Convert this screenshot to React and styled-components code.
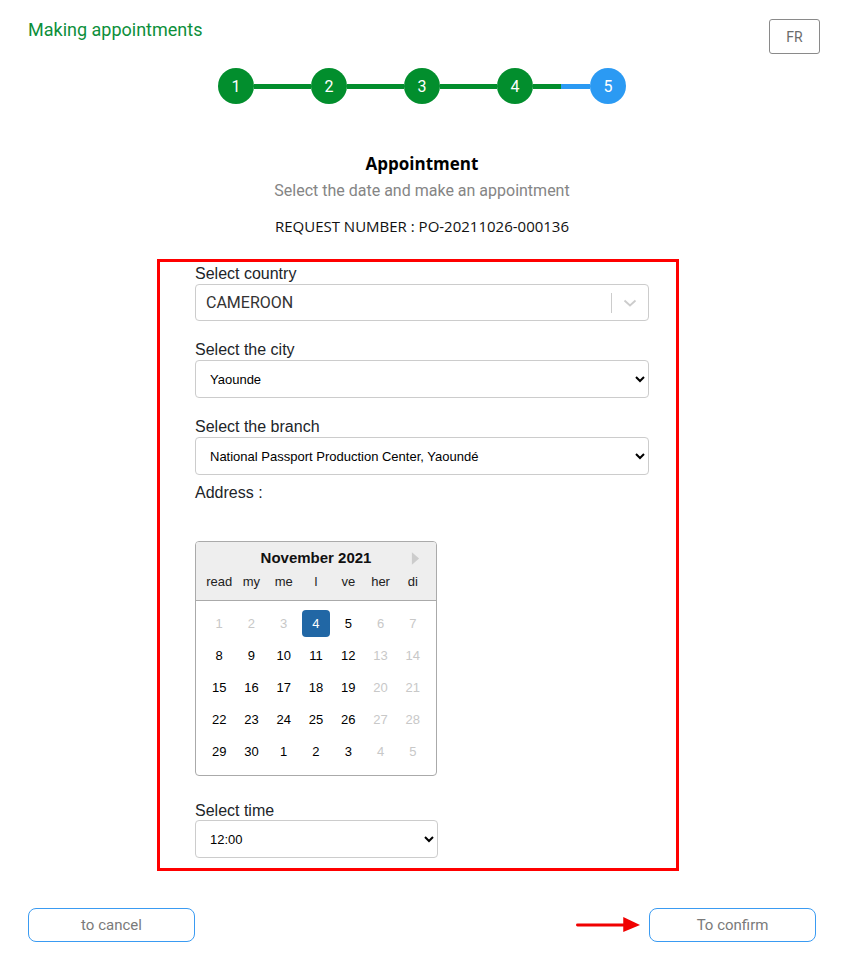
import React from "react";
import styled, { createGlobalStyle } from "styled-components";

const GlobalStyle = createGlobalStyle`
  body {
    margin: 0;
    background: #ffffff;
    font-family: Roboto, "Liberation Sans", Arial, sans-serif;
  }
`;

const steps = [1, 2, 3, 4, 5];
const weekDays = ["read", "my", "me", "l", "ve", "her", "di"];
const days = [
  [1, true], [2, true], [3, true], [4, false, true], [5], [6, true], [7, true],
  [8], [9], [10], [11], [12], [13, true], [14, true],
  [15], [16], [17], [18], [19], [20, true], [21, true],
  [22], [23], [24], [25], [26], [27, true], [28, true],
  [29], [30], [1], [2], [3], [4, true], [5, true],
];

export default function App() {
  return (
    <Page>
      <GlobalStyle />
      <Header>
        <Title>Making appointments</Title>
        <LangButton>FR</LangButton>
      </Header>

      <Stepper>
        {steps.map((n, i) => (
          <React.Fragment key={n}>
            <StepCircle $current={n === 5}>{n}</StepCircle>
            {i < steps.length - 1 && <Connector $half={n === 4} />}
          </React.Fragment>
        ))}
      </Stepper>

      <Heading>Appointment</Heading>
      <Subtitle>Select the date and make an appointment</Subtitle>
      <RequestNumber>REQUEST NUMBER : PO-20211026-000136</RequestNumber>

      <FormBox>
        <Label>Select country</Label>
        <ComboBox>
          <ComboValue>CAMEROON</ComboValue>
          <ComboSeparator />
          <ComboArrow viewBox="0 0 20 20">
            <path
              d="M4.5 7.5 L10 12.5 L15.5 7.5"
              fill="none"
              stroke="#cccccc"
              strokeWidth="1.8"
            />
          </ComboArrow>
        </ComboBox>

        <FieldGap />
        <Label>Select the city</Label>
        <NativeSelect defaultValue="yaounde">
          <option value="yaounde">Yaounde</option>
        </NativeSelect>

        <FieldGap />
        <Label>Select the branch</Label>
        <NativeSelect defaultValue="npc">
          <option value="npc">National Passport Production Center, Yaoundé</option>
        </NativeSelect>

        <AddressLabel>Address :</AddressLabel>

        <Calendar>
          <CalendarHead>
            <MonthRow>
              <MonthTitle>November 2021</MonthTitle>
              <NextArrow viewBox="0 0 10 16">
                <path d="M1 1 L9 8 L1 15 Z" fill="#cccccc" />
              </NextArrow>
            </MonthRow>
            <WeekRow>
              {weekDays.map((d) => (
                <WeekDay key={d}>{d}</WeekDay>
              ))}
            </WeekRow>
          </CalendarHead>
          <DayGrid>
            {days.map(([n, off, sel], i) => (
              <DayCell key={i}>
                <Day $off={off} $selected={sel}>
                  {n}
                </Day>
              </DayCell>
            ))}
          </DayGrid>
        </Calendar>

        <TimeLabel>Select time</TimeLabel>
        <NativeSelect defaultValue="12" $narrow>
          <option value="12">12:00</option>
        </NativeSelect>
      </FormBox>

      <Footer>
        <ActionButton>to cancel</ActionButton>
        <ConfirmGroup>
          <PointerArrow viewBox="0 0 66 16">
            <rect x="0" y="6.5" width="50" height="3" rx="1.5" fill="#f00000" />
            <path d="M48 0 L65 8 L48 15 Z" fill="#f00000" />
          </PointerArrow>
          <ActionButton>To confirm</ActionButton>
        </ConfirmGroup>
      </Footer>
    </Page>
  );
}

const Page = styled.div`
  width: 844px;
  min-height: 964px;
  display: flex;
  flex-direction: column;
`;

const Header = styled.div`
  display: flex;
  justify-content: space-between;
  align-items: flex-start;
  padding: 19px 24px 0 28px;
`;

const Title = styled.div`
  font-size: 18px;
  line-height: 22px;
  color: #0d8f3b;
`;

const LangButton = styled.button`
  width: 51px;
  height: 35px;
  box-sizing: border-box;
  border: 1px solid #8a8a8a;
  border-radius: 3px;
  background: #ffffff;
  color: #6b6b6b;
  font-family: Roboto, sans-serif;
  font-size: 14px;
  padding: 0;
`;

const Stepper = styled.div`
  display: flex;
  justify-content: center;
  align-items: center;
  margin-top: 14px;
`;

const StepCircle = styled.div`
  width: 36px;
  height: 36px;
  border-radius: 50%;
  background: ${(p) => (p.$current ? "#2b9af3" : "#028e2d")};
  color: #ffffff;
  font-size: 16px;
  display: flex;
  align-items: center;
  justify-content: center;
`;

const Connector = styled.div`
  width: 57px;
  height: 5px;
  background: ${(p) =>
    p.$half
      ? "linear-gradient(90deg, #028e2d 0 50%, #2b9af3 50% 100%)"
      : "#028e2d"};
`;

const Heading = styled.div`
  margin-top: 49px;
  text-align: center;
  font-family: "Open Sans", Roboto, sans-serif;
  font-size: 17px;
  font-weight: 700;
  line-height: 22px;
  color: #000000;
`;

const Subtitle = styled.div`
  margin-top: 5px;
  text-align: center;
  font-size: 16px;
  line-height: 22px;
  color: #858585;
`;

const RequestNumber = styled.div`
  margin-top: 13px;
  text-align: center;
  font-family: "Open Sans", Roboto, sans-serif;
  font-size: 15px;
  line-height: 22px;
  color: #111111;
`;

const FormBox = styled.div`
  margin: 22px 0 0 157px;
  width: 522px;
  box-sizing: border-box;
  border: 3px solid #ff0000;
  padding: 3px 27px 10px 35px;
  display: flex;
  flex-direction: column;
  align-items: flex-start;
  font-family: "Liberation Sans", Arial, sans-serif;
`;

const Label = styled.div`
  font-size: 16px;
  line-height: 18px;
  color: #212529;
  height: 19px;
`;

const FieldGap = styled.div`
  height: 20px;
`;

const ComboBox = styled.div`
  width: 454px;
  height: 37px;
  box-sizing: border-box;
  border: 1px solid #cccccc;
  border-radius: 4px;
  display: flex;
  align-items: center;
`;

const ComboValue = styled.div`
  flex: 1;
  padding-left: 10px;
  font-family: Roboto, sans-serif;
  font-size: 16px;
  color: #333333;
`;

const ComboSeparator = styled.div`
  width: 1px;
  height: 20px;
  background: #cccccc;
`;

const ComboArrow = styled.svg`
  width: 20px;
  height: 20px;
  margin: 0 8px;
`;

const NativeSelect = styled.select`
  width: ${(p) => (p.$narrow ? "243px" : "454px")};
  height: 38px;
  box-sizing: border-box;
  border: 1px solid #cccccc;
  border-radius: 4px;
  background: #ffffff;
  padding: 0 6px 0 10px;
  font-family: "Liberation Sans", Arial, sans-serif;
  font-size: 13px;
  color: #000000;
`;

const AddressLabel = styled.div`
  margin-top: 9px;
  font-size: 16px;
  line-height: 18px;
  color: #212529;
`;

const Calendar = styled.div`
  margin-top: 39px;
  width: 242px;
  box-sizing: border-box;
  border: 1px solid #aaaaaa;
  border-radius: 4px;
  overflow: hidden;
`;

const CalendarHead = styled.div`
  background: #eeeeee;
  border-bottom: 1px solid #aaaaaa;
  height: 59px;
  box-sizing: border-box;
  padding-top: 5px;
`;

const MonthRow = styled.div`
  position: relative;
  text-align: center;
  height: 22px;
`;

const MonthTitle = styled.div`
  font-size: 15px;
  font-weight: 700;
  line-height: 22px;
  color: #111111;
`;

const NextArrow = styled.svg`
  position: absolute;
  right: 16px;
  top: 4px;
  width: 9px;
  height: 15px;
`;

const WeekRow = styled.div`
  display: grid;
  grid-template-columns: repeat(7, 1fr);
  padding: 0 7px;
  margin-top: 4px;
`;

const WeekDay = styled.div`
  text-align: center;
  font-size: 13px;
  line-height: 18px;
  color: #222222;
`;

const DayGrid = styled.div`
  display: grid;
  grid-template-columns: repeat(7, 1fr);
  grid-auto-rows: 32px;
  padding: 6px 7px 8px;
`;

const DayCell = styled.div`
  display: flex;
  align-items: center;
  justify-content: center;
`;

const Day = styled.div`
  width: 28px;
  height: 27px;
  border-radius: 4px;
  display: flex;
  align-items: center;
  justify-content: center;
  font-size: 13px;
  background: ${(p) => (p.$selected ? "#2167a5" : "transparent")};
  color: ${(p) => (p.$selected ? "#ffffff" : p.$off ? "#c8c8c8" : "#000000")};
`;

const TimeLabel = styled(Label)`
  margin-top: 26px;
  height: 18px;
`;

const Footer = styled.div`
  display: flex;
  justify-content: space-between;
  align-items: center;
  padding: 0 28px;
  margin-top: 37px;
`;

const ConfirmGroup = styled.div`
  display: flex;
  align-items: center;
  gap: 8px;
`;

const PointerArrow = styled.svg`
  width: 65px;
  height: 16px;
`;

const ActionButton = styled.button`
  width: 167px;
  height: 34px;
  box-sizing: border-box;
  border: 1px solid #3a9bf2;
  border-radius: 8px;
  background: #ffffff;
  color: #7a7a7a;
  font-family: Roboto, sans-serif;
  font-size: 15px;
  padding: 0;
`;
